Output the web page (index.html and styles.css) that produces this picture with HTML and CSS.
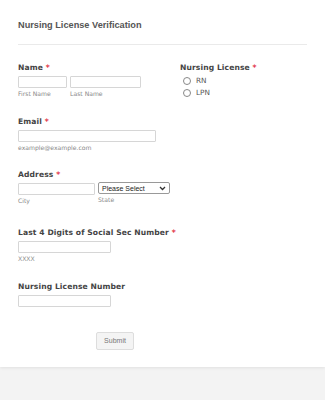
FILE: index.html
```html
<!DOCTYPE html>
<html>
<head>
<meta charset="utf-8">
<link rel="stylesheet" href="styles.css">
</head>
<body>
<div class="card">
  <h1 class="title">Nursing License Verification</h1>
  <hr class="divider">
  <div class="row-top">
    <div class="field">
      <div class="label">Name <span class="req">*</span></div>
      <div class="inputs">
        <div class="sub-wrap"><div class="input w-first"></div><div class="sub">First Name</div></div>
        <div class="sub-wrap"><div class="input w-last"></div><div class="sub">Last Name</div></div>
      </div>
    </div>
    <div class="field radio-field">
      <div class="label">Nursing License <span class="req">*</span></div>
      <div class="radio r-first"><span class="circle"></span>RN</div>
      <div class="radio"><span class="circle"></span>LPN</div>
    </div>
  </div>

  <div class="field f-email">
    <div class="label">Email <span class="req">*</span></div>
    <div class="input w-email"></div>
    <div class="sub">example@example.com</div>
  </div>

  <div class="field f-address">
    <div class="label">Address <span class="req">*</span></div>
    <div class="inputs">
      <div class="sub-wrap"><div class="input w-city"></div><div class="sub">City</div></div>
      <div class="sub-wrap"><div class="select">Please Select<svg width="7" height="5" viewBox="0 0 7 5"><path d="M1 1 L3.5 3.5 L6 1" fill="none" stroke="#333" stroke-width="1.3"/></svg></div><div class="sub">State</div></div>
    </div>
  </div>

  <div class="field f-ssn">
    <div class="label">Last 4 Digits of Social Sec Number <span class="req">*</span></div>
    <div class="input w-short"></div>
    <div class="sub">XXXX</div>
  </div>

  <div class="field f-lic">
    <div class="label">Nursing License Number</div>
    <div class="input w-short"></div>
  </div>

  <div class="actions"><button class="submit">Submit</button></div>
</div>
</body>
</html>
```
FILE: styles.css
```css
html, body { margin: 0; padding: 0; }
body {
  background: #f3f3f3;
  width: 325px;
  height: 400px;
  overflow: hidden;
  font-family: "DejaVu Sans", Verdana, sans-serif;
}
.card {
  background: #fff;
  height: 367px;
  box-sizing: border-box;
  padding: 19px 18px 0 18px;
  box-shadow: 0 1px 3px rgba(0,0,0,0.08);
}
.title {
  margin: 0;
  font-family: "Liberation Sans", Arial, sans-serif;
  font-size: 9.2px;
  font-weight: bold;
  color: #555;
  line-height: 13px;
}
.divider {
  border: 0;
  border-top: 1px solid #eaeaea;
  margin: 12px 0 0 0;
  width: 289px;
}
.row-top {
  display: flex;
  margin-top: 18px;
}
.radio-field { margin-left: 39px; }
.label {
  font-size: 7.6px;
  font-weight: bold;
  color: #444;
  line-height: 10px;
  letter-spacing: 0.1px;
}
.req { color: #e0283a; }
.inputs { display: flex; gap: 3px; margin-top: 3px; }
.sub-wrap { display: flex; flex-direction: column; }
.input {
  height: 12px;
  border: 1px solid #d6d6d6;
  border-radius: 1px;
  box-sizing: border-box;
  background: #fff;
}
.w-first { width: 49px; }
.w-last { width: 71px; }
.w-email { width: 138px; margin-top: 3px; }
.w-city { width: 77px; height: 12px; }
.w-short { width: 93px; margin-top: 3px; }
.sub {
  font-size: 6.1px;
  color: #888;
  margin-top: 2px;
  line-height: 7px;
}
.radio {
  display: flex;
  align-items: center;
  font-size: 7.3px;
  color: #555;
  line-height: 12px;
  margin-left: 3px;
}
.r-first { margin-top: 2px; }
.circle {
  width: 6px; height: 6px;
  border: 1px solid #888;
  border-radius: 50%;
  margin-right: 5px;
}
.select {
  width: 72px;
  height: 12px;
  box-sizing: border-box;
  border: 1px solid #999;
  border-radius: 2px;
  display: flex;
  align-items: center;
  justify-content: space-between;
  padding: 0 3px 0 3px;
  font-family: "Liberation Sans", Arial, sans-serif;
  font-size: 7px;
  color: #222;
  margin-top: -1px;
}
.f-email { margin-top: 18px; }
.f-address { margin-top: 19px; }
.f-ssn { margin-top: 24px; }
.f-lic { margin-top: 20px; }
.actions { padding-left: 78px; margin-top: 21px; }
.submit {
  width: 38px;
  height: 18px;
  padding: 0;
  border: 1px solid #ddd;
  border-radius: 2px;
  background: #f4f4f4;
  font-family: "Liberation Sans", Arial, sans-serif;
  font-size: 7px;
  color: #777;
}
```
